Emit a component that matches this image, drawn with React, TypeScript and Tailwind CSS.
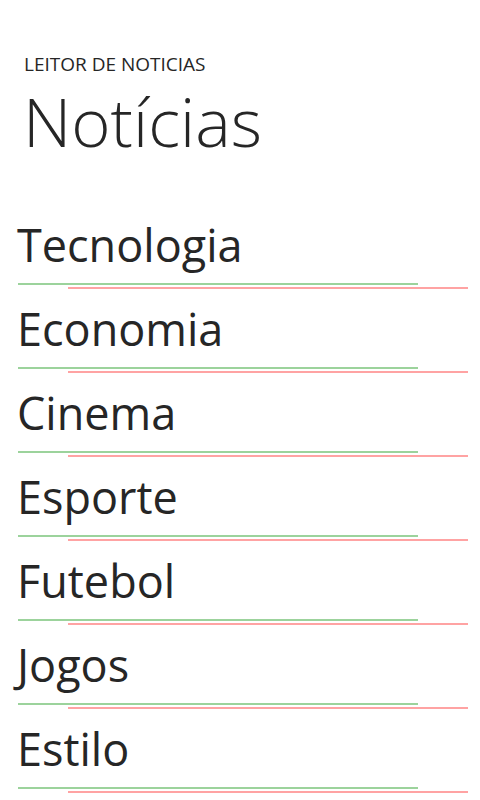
const categorias = ['Tecnologia', 'Economia', 'Cinema', 'Esporte', 'Futebol', 'Jogos', 'Estilo']

export default function App() {
  return (
    <div className="h-[800px] w-[480px] overflow-hidden bg-white text-[#262626] font-['Open_Sans',sans-serif]">
      <header className="pl-[24px] pt-[52px]">
        <div className="text-[19px] leading-[24px]">LEITOR DE NOTICIAS</div>
        <h1 className="mt-[5px] -ml-[1px] text-[67px] font-light leading-[80px]">Notícias</h1>
      </header>
      <ul className="mt-[56px]">
        {categorias.map((c) => (
          <li key={c} className="h-[84px]">
            <div className="h-[66px] pl-[17px] text-[45px] leading-[56px]">{c}</div>
            <div className="ml-[18px] h-[2px] w-[400px] bg-[#9cd39c]" />
            <div className="ml-[68px] mt-[2px] h-[2px] w-[400px] bg-[#ffa3a3]" />
          </li>
        ))}
      </ul>
    </div>
  )
}
